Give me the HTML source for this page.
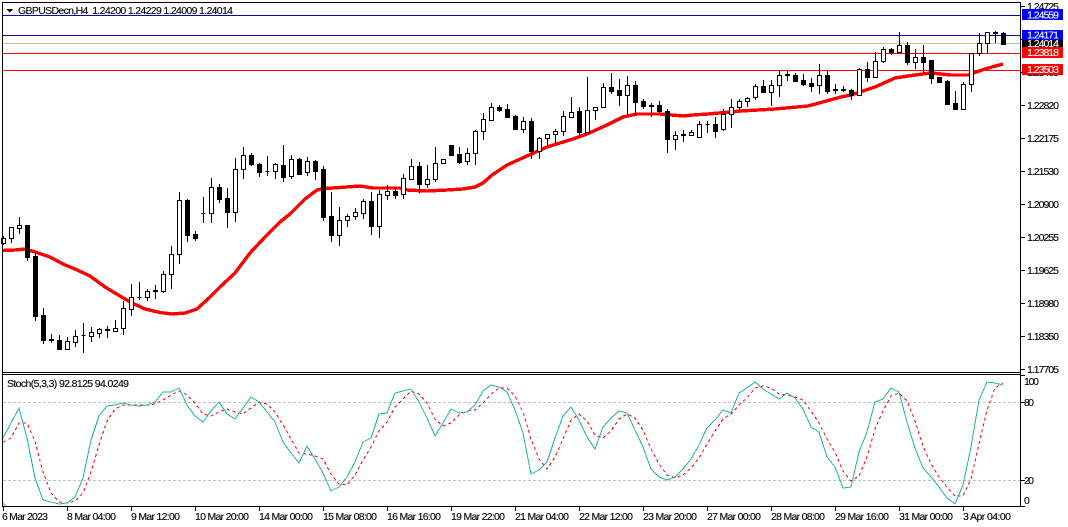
<!DOCTYPE html>
<html><head><meta charset="utf-8"><style>
html,body{margin:0;padding:0;background:#fff;width:1068px;height:527px;overflow:hidden}
svg{display:block}
text{font-family:"Liberation Sans",Arial,sans-serif;font-size:10.5px;fill:#000;stroke:#000;stroke-width:.12}
.w{fill:#fff;stroke:#fff}
</style></head><body>
<svg width="1068" height="527" viewBox="0 0 1068 527" xmlns="http://www.w3.org/2000/svg">
<rect width="1068" height="527" fill="#fff"/>
<g shape-rendering="crispEdges" stroke-width="1" fill="none">
<path d="M3 15.5H1020M3 35.5H1020" stroke="#0000cd"/>
<path d="M3 43.5H1020" stroke="#c0c0c0"/>
<path d="M3 53.5H1020M3 70.5H1020" stroke="#f00"/>
<path d="M3 402.5H1020M3 480.5H1020" stroke="#c0c0c0" stroke-dasharray="3 2"/>
<!-- moving average -->
<polyline stroke="#f00" stroke-width="3.4" points="3,250.5 15,250 25,249 35,252 50,257 65,265 75,269 90,276 105,287 120,296 130,302 145,309 160,312.5 172,314 185,313 197,309 210,297 220,287 235,273 250,253 265,237 280,222 290,214 305,199 317,190 325,188.5 340,187.5 360,186 373,188 400,188 407,190 427,191 447,190 463,189 475,187 483,183 492,175 507,165 527,156 547,147 573,139 587,134 607,125 623,117 637,114 660,114 683,116 693,115 708,114 741,111 775,109 808,106 841,97 851,95 875,87 895,78 915,75 931,73 951,75 968,75 985,69 1003,64"/>
<!-- wicks -->
<path stroke="#000" d="M3.5 236V245M11.5 227V243M19.5 217V234M27.5 225V261M35.5 252V321M43.5 308V344M51.5 334V343M59.5 335V350M67.5 337V350M75.5 330V347M83.5 323V353M91.5 327V342M99.5 328V338M107.5 326V338M115.5 320V332M123.5 301V335M131.5 284V316M139.5 282V300M147.5 289V301M155.5 285V299M163.5 271V293M171.5 246V289M179.5 192V264M187.5 199V242M195.5 231V241M203.5 197V223M211.5 178V223M219.5 184V203M227.5 188V228M235.5 158V222M243.5 147V179M251.5 153V166M259.5 163V177M267.5 156V176M275.5 163V179M283.5 145V182M291.5 155V179M299.5 158V174M307.5 157V176M315.5 160V180M323.5 166V221M331.5 192V242M339.5 207V246M347.5 214V227M355.5 208V220M363.5 199V219M371.5 192V235M379.5 190V238M387.5 185V200M395.5 188V199M403.5 174V199M411.5 159V180M419.5 162V193M427.5 165V188M435.5 147V182M443.5 159V164M451.5 145V155M459.5 147V164M467.5 148V165M475.5 130V165M483.5 113V140M491.5 103V121M499.5 105V112M507.5 104V117M515.5 115V130M523.5 117V133M531.5 118V159M539.5 137V159M547.5 134V145M555.5 129V143M563.5 111V136M571.5 97V118M579.5 107V137M587.5 77V133M595.5 107V120M603.5 83V108M611.5 73V94M619.5 79V106M627.5 76V115M635.5 81V115M643.5 99V109M651.5 103V117M659.5 101V113M667.5 109V153M675.5 131V150M683.5 130V142M691.5 130V135M699.5 121V137M707.5 121V133M715.5 117V138M723.5 109V131M731.5 99V128M739.5 99V111M747.5 97V107M755.5 84V100M763.5 80V92M771.5 80V106M779.5 70V97M787.5 71V81M795.5 73V82M803.5 74V86M811.5 78V92M819.5 64V94M827.5 71V94M835.5 84V94M843.5 86V92M851.5 89V100M859.5 68V95M867.5 62V82M875.5 52V77M883.5 47V63M891.5 48V55M899.5 32V52M907.5 42V65M915.5 49V69M923.5 45V74M931.5 60V84M939.5 77V83M947.5 80V105M955.5 91V109M963.5 82V110M971.5 53V92M979.5 33V56M987.5 32V53M995.5 31V43M1003.5 32V44"/>
<!-- white bodies -->
<path stroke="#000" fill="#fff" d="M1.5 238.5h4v5h-4zM9.5 227.5h4v11h-4zM17.5 225.5h4v3h-4zM65.5 341.5h4v8h-4zM73.5 336.5h4v6h-4zM89.5 332.5h4v4h-4zM97.5 329.5h4v4h-4zM113.5 328.5h4v3h-4zM121.5 308.5h4v20h-4zM129.5 297.5h4v12h-4zM145.5 291.5h4v6h-4zM161.5 274.5h4v17h-4zM169.5 254.5h4v20h-4zM177.5 200.5h4v54h-4zM209.5 187.5h4v26h-4zM233.5 169.5h4v43h-4zM241.5 155.5h4v14h-4zM273.5 164.5h4v7h-4zM289.5 159.5h4v17h-4zM305.5 161.5h4v11h-4zM337.5 220.5h4v15h-4zM345.5 216.5h4v4h-4zM353.5 212.5h4v4h-4zM361.5 201.5h4v12h-4zM377.5 194.5h4v32h-4zM385.5 191.5h4v4h-4zM401.5 178.5h4v16h-4zM409.5 166.5h4v13h-4zM425.5 179.5h4v5h-4zM433.5 163.5h4v16h-4zM441.5 159.5h4v4h-4zM465.5 153.5h4v8h-4zM473.5 131.5h4v22h-4zM481.5 119.5h4v12h-4zM489.5 107.5h4v13h-4zM521.5 121.5h4v8h-4zM537.5 138.5h4v13h-4zM545.5 134.5h4v4h-4zM553.5 131.5h4v3h-4zM561.5 116.5h4v15h-4zM569.5 112.5h4v5h-4zM585.5 110.5h4v22h-4zM593.5 107.5h4v3h-4zM601.5 87.5h4v20h-4zM625.5 85.5h4v10h-4zM673.5 135.5h4v4h-4zM689.5 132.5h4v3h-4zM697.5 124.5h4v13h-4zM721.5 114.5h4v15h-4zM729.5 107.5h4v7h-4zM737.5 101.5h4v6h-4zM745.5 98.5h4v3h-4zM753.5 86.5h4v11h-4zM769.5 85.5h4v7h-4zM777.5 75.5h4v10h-4zM817.5 75.5h4v10h-4zM857.5 69.5h4v26h-4zM873.5 61.5h4v16h-4zM881.5 49.5h4v12h-4zM897.5 45.5h4v7h-4zM913.5 57.5h4v5h-4zM961.5 84.5h4v25h-4zM969.5 53.5h4v31h-4zM977.5 43.5h4v10h-4zM985.5 32.5h4v11h-4z"/>
<!-- black bodies -->
<path stroke="#000" fill="#000" d="M25.5 225.5h4v32h-4zM33.5 256.5h4v60h-4zM41.5 315.5h4v25h-4zM49.5 339.5h4v1h-4zM57.5 340.5h4v9h-4zM81.5 335.5h4v0h-4zM105.5 329.5h4v1h-4zM137.5 297.5h4v0h-4zM153.5 290.5h4v1h-4zM185.5 200.5h4v35h-4zM193.5 234.5h4v4h-4zM201.5 213.5h4v0h-4zM217.5 187.5h4v12h-4zM225.5 198.5h4v14h-4zM249.5 155.5h4v9h-4zM257.5 164.5h4v8h-4zM265.5 171.5h4v0h-4zM281.5 165.5h4v12h-4zM297.5 159.5h4v15h-4zM313.5 161.5h4v10h-4zM321.5 169.5h4v48h-4zM329.5 216.5h4v19h-4zM369.5 201.5h4v25h-4zM393.5 191.5h4v4h-4zM417.5 166.5h4v18h-4zM449.5 145.5h4v10h-4zM457.5 154.5h4v8h-4zM497.5 107.5h4v3h-4zM505.5 109.5h4v8h-4zM513.5 116.5h4v13h-4zM529.5 121.5h4v30h-4zM577.5 111.5h4v21h-4zM609.5 87.5h4v4h-4zM617.5 90.5h4v5h-4zM633.5 85.5h4v17h-4zM641.5 101.5h4v5h-4zM649.5 105.5h4v1h-4zM657.5 105.5h4v6h-4zM665.5 111.5h4v28h-4zM681.5 134.5h4v1h-4zM705.5 124.5h4v0h-4zM713.5 124.5h4v7h-4zM761.5 86.5h4v6h-4zM785.5 74.5h4v1h-4zM793.5 75.5h4v6h-4zM801.5 80.5h4v4h-4zM809.5 83.5h4v3h-4zM825.5 75.5h4v16h-4zM833.5 89.5h4v1h-4zM841.5 89.5h4v1h-4zM849.5 90.5h4v5h-4zM865.5 69.5h4v8h-4zM889.5 49.5h4v3h-4zM905.5 45.5h4v17h-4zM921.5 57.5h4v5h-4zM929.5 60.5h4v18h-4zM937.5 77.5h4v5h-4zM945.5 81.5h4v23h-4zM953.5 103.5h4v6h-4zM993.5 32.5h4v1h-4zM1001.5 33.5h4v11h-4z"/>
<!-- signal -->
<polyline stroke="#f00" stroke-dasharray="3 3" points="3,442 11,438 19,423 27,423 35,441 43,472 51,493 59,502 67,503 75,501 83,493 91,472 99,445 107,421 115,409 123,405 131,405 139,405 147,405 155,404 163,400 171,395 179,391 187,395 195,403 203,414 211,416 219,412 227,409 235,412 243,414 251,408 259,402 267,404 275,412 283,425 291,439 299,453 307,454 315,456 323,459 331,474 339,484 347,485 355,475 363,460 371,447 379,431 387,422 395,407 403,399 411,391 419,394 427,403 435,419 443,426 451,423 459,415 467,411 475,410 483,403 491,394 499,388 507,388 515,396 523,412 531,439 539,459 547,469 555,457 563,439 571,420 579,414 587,421 595,435 603,438 611,431 619,419 627,414 635,418 643,430 651,449 659,464 667,475 675,478 683,475 691,468 699,458 707,444 715,431 723,419 731,414 739,405 747,398 755,388 763,386 771,388 779,394 787,395 795,397 803,400 811,411 819,423 827,439 835,452 843,471 851,481 859,476 867,457 875,429 883,411 891,396 899,393 907,401 915,421 923,446 931,464 939,477 947,487 955,496 963,496 971,479 979,444 987,410 995,388 1003,383"/>
<!-- main stochastic -->
<polyline stroke="#20b2aa" points="3,438 11,423 19,408 27,438 35,478 43,500 51,502 59,504 67,503 75,497 83,478 91,440 99,416 107,406 115,405 123,403 131,405 139,406 147,405 155,402 163,392 171,392 179,388 187,405 195,416 203,422 211,411 219,402 227,414 235,419 243,408 251,397 259,402 267,412 275,422 283,442 291,453 299,463 307,446 315,459 323,473 331,491 339,487 347,477 355,462 363,442 371,438 379,414 387,413 395,393 403,391 411,389 419,402 427,418 435,436 443,423 451,409 459,413 467,412 475,405 483,391 491,385 499,387 507,392 515,410 523,433 531,474 539,470 547,462 555,438 563,416 571,407 579,420 587,437 595,449 603,427 611,418 619,411 627,413 635,430 643,447 651,469 659,477 667,480 675,477 683,469 691,459 699,445 707,428 715,420 723,410 731,413 739,393 747,388 755,382 763,389 771,394 779,399 787,393 795,398 803,409 811,427 819,432 827,457 835,467 843,488 851,487 859,452 867,432 875,402 883,399 891,388 899,392 907,422 915,448 923,468 931,477 939,487 947,498 955,504 963,485 971,447 979,400 987,382 995,383 1003,385"/>
<polygon points="3,502 7,506 3,506" fill="#c0c0c0"/>
<!-- frames -->
<path stroke="#000" d="M2.5 2V507M2 2.5H1021M1020.5 2V507M2 372.5H1021M2 374.5H1021M2 506.5H1021"/>
<!-- ticks -->
<path stroke="#000" d="M1021 6.5h4M1021 39.5h4M1021 72.5h4M1021 105.5h4M1021 138.5h4M1021 171.5h4M1021 204.5h4M1021 237.5h4M1021 270.5h4M1021 303.5h4M1021 336.5h4M1021 369.5h4M1021 375.5h4M1021 402.5h4M1021 480.5h4M1021 506.5h4M3.5 507v4M67.5 507v4M131.5 507v4M195.5 507v4M259.5 507v4M323.5 507v4M387.5 507v4M451.5 507v4M515.5 507v4M579.5 507v4M643.5 507v4M707.5 507v4M771.5 507v4M835.5 507v4M899.5 507v4M963.5 507v4"/>
<polygon points="6,9 13,9 9.5,12.5" fill="#000" stroke="none"/>
</g>
<text x="18" y="14" textLength="215" lengthAdjust="spacing">GBPUSDecn,H4&#160;&#160;1.24200 1.24229 1.24009 1.24014</text>
<text x="7" y="387" textLength="122" lengthAdjust="spacing">Stoch(5,3,3) 92.8125 94.0249</text>
<!-- right scale -->
<g>
<text x="1027" y="10" textLength="32">1.24725</text>
<text x="1027" y="76" textLength="32">1.23465</text>
<text x="1027" y="109" textLength="32">1.22820</text>
<text x="1027" y="142" textLength="32">1.22175</text>
<text x="1027" y="175" textLength="32">1.21530</text>
<text x="1027" y="208" textLength="32">1.20900</text>
<text x="1027" y="241" textLength="32">1.20255</text>
<text x="1027" y="274" textLength="32">1.19625</text>
<text x="1027" y="307" textLength="32">1.18980</text>
<text x="1027" y="340" textLength="32">1.18350</text>
<text x="1027" y="373" textLength="32">1.17705</text>
</g>
<g shape-rendering="crispEdges">
<rect x="1022" y="9" width="41" height="11" fill="#00f"/>
<rect x="1022" y="30" width="41" height="11" fill="#00f"/>
<rect x="1022" y="40" width="41" height="8" fill="#000"/>
<rect x="1022" y="47" width="41" height="11" fill="#f00"/>
<rect x="1022" y="64" width="41" height="11" fill="#f00"/>
</g>
<text class="w" x="1027" y="18.5" textLength="32">1.24559</text>
<text class="w" x="1027" y="38.5" textLength="32">1.24171</text>
<text class="w" x="1027" y="47" textLength="32">1.24014</text>
<text class="w" x="1027" y="56" textLength="32">1.23818</text>
<text class="w" x="1027" y="73" textLength="32">1.23503</text>
<text x="1024" y="385" textLength="15">100</text>
<text x="1024" y="406" textLength="10">80</text>
<text x="1024" y="484" textLength="10">20</text>
<text x="1024" y="504">0</text>
<!-- time scale -->
<text x="2" y="520" textLength="46">6 Mar 2023</text>
<text x="67" y="520" textLength="49">8 Mar 04:00</text>
<text x="131" y="520" textLength="49">9 Mar 12:00</text>
<text x="195" y="520" textLength="54">10 Mar 20:00</text>
<text x="259" y="520" textLength="54">14 Mar 00:00</text>
<text x="323" y="520" textLength="54">15 Mar 08:00</text>
<text x="387" y="520" textLength="54">16 Mar 16:00</text>
<text x="451" y="520" textLength="54">19 Mar 22:00</text>
<text x="515" y="520" textLength="54">21 Mar 04:00</text>
<text x="579" y="520" textLength="54">22 Mar 12:00</text>
<text x="643" y="520" textLength="54">23 Mar 20:00</text>
<text x="707" y="520" textLength="54">27 Mar 00:00</text>
<text x="771" y="520" textLength="54">28 Mar 08:00</text>
<text x="835" y="520" textLength="54">29 Mar 16:00</text>
<text x="899" y="520" textLength="54">31 Mar 00:00</text>
<text x="963" y="520" textLength="48">3 Apr 04:00</text>
</svg>
</body></html>
